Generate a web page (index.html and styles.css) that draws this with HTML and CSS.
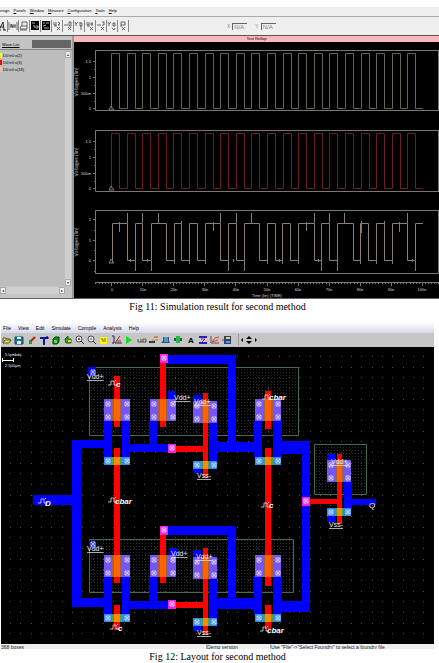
FILE: index.html
```html
<!DOCTYPE html>
<html lang="en">
<head>
<meta charset="utf-8">
<title>Simulation and layout figures</title>
<link rel="stylesheet" href="styles.css">
</head>
<body>
<figure class="figure">
  <div class="scope">
    <nav class="scope-menu">
      <button>esign</button><button><u>P</u>anels</button><button><u>W</u>indow</button><button><u>M</u>easure</button><button><u>C</u>onfiguration</button><button><u>T</u>ools</button><button><u>H</u>elp</button>
    </nav>
    <div class="scope-tools">
      <div class="scope-icons">
        <button aria-label="Font"><svg viewBox="0 0 10 12"><path d="M2 10L6 2l1 8M3 7h4M1 10h3M6 10h3" class="ik"/></svg></button>
        <button aria-label="Panel"><svg viewBox="0 0 10 12"><path d="M1 2v8M9 2v8M3 8V4l2 4V4M7 4v4M2 6h6" class="ig"/></svg></button>
        <button aria-label="Print"><svg viewBox="0 0 10 12"><path d="M3 6V2h5v4M2 6h6v3H1zM1 10h7" class="ig"/></svg></button>
        <button aria-label="Add panel"><svg viewBox="0 0 10 12"><path d="M1 1h8v9H1z"/><path d="M2 3h3M3 6h2v2M6 6h2v2H6" class="iw"/></svg></button>
        <button aria-label="Remove panel"><svg viewBox="0 0 10 12"><path d="M1 1h8v9H1z"/><path d="M2 3h2M5 3h3M2 6l3-1M3 8h5" class="iw"/></svg></button>
        <button aria-label="Zoom X"><svg viewBox="0 0 10 12"><path d="M2 2v3h2V2M6 2l2 1-2 2h2M2 6h3M5 7l3 3M8 7l-3 3" class="ig"/></svg></button>
        <button aria-label="Pan X"><svg viewBox="0 0 10 12"><path d="M1 5h4M6 2h2v4H6zM5 7l3 3M8 7l-3 3" class="ig"/></svg></button>
        <button aria-label="Zoom Y"><svg viewBox="0 0 10 12"><path d="M1 2l1 2 2-2M2 4v2M6 2v4h2V3H6M7 6v4" class="ig"/></svg></button>
        <button aria-label="Fit X"><svg viewBox="0 0 10 12"><path d="M2 2v3h2V2M7 2v4M5 4h3M2 6h3M5 7l3 3M8 7l-3 3" class="ig"/></svg></button>
        <button aria-label="Move X"><svg viewBox="0 0 10 12"><path d="M1 5h4M6 2h2v3H6M5 7l3 3M8 7l-3 3" class="ig"/></svg></button>
        <button aria-label="Fit Y"><svg viewBox="0 0 10 12"><path d="M1 2l1 2 2-2M2 4v2M6 3h2v3H6zM5 8l2 2 1-2" class="ig"/></svg></button>
        <button aria-label="Reset"><svg viewBox="0 0 10 12"><path d="M3 2h4v3H3zM3 5v2M4 7l3 3M7 7l-3 3" class="ig"/></svg></button>
      </div>
      <div class="coords">
        <label for="cx">X</label><input id="cx" value="N/A">
        <label for="cy">Y</label><input id="cy" value="N/A">
      </div>
    </div>
    <div class="scope-body">
      <aside class="waves">
        <div class="waves-head"><span>Wave List</span><i></i></div>
        <div class="waves-main">
          <ul>
            <li><b class="yellow"></b>D0:tr0:v(2)</li>
            <li><b class="red"></b>D0:tr0:v(3)</li>
            <li><b class="peach"></b>D0:tr0:v(18)</li>
          </ul>
          <div class="vbar"><button aria-label="Scroll up">▴</button><button aria-label="Scroll down">▾</button></div>
        </div>
        <div class="hbar"><button aria-label="Scroll left">◂</button><button aria-label="Scroll right">▸</button></div>
      </aside>
      <div class="plots">
        <div class="plots-title">Test Reflop</div>
        <svg viewBox="74 42 365 256" class="plots-area" id="plots">
          <g class="frame">
            <path d="M439 50.500H95.500V110.500H439M439 130.500H95.500V191.500H439M439 210.500H95.500V273.500H439M438.500 50v60M438.500 130v61M438.500 210v63M95 282.500H439"/>
            <path d="M93 61.500h3M93 77.500h3M93 93.500h3M93 108.500h3M93 141.500h3M93 157.500h3M93 173.500h3M93 188.500h3M93 219.500h3M93 240.500h3M93 260.500h3M94 69.500h2M94 85.500h2M94 101.500h2M94 149.500h2M94 165.500h2M94 181.500h2M94 230.500h2M94 250.500h2M94 271.500h2"/>
          </g>
          <path id="ticks" class="frame"/>
          <path id="wave1" class="w1"/>
          <path id="wave2" class="w2"/>
          <path id="wave3" class="w3"/>
          <path class="spikes" d="M127.500 213v10M142.500 213v10M158.500 213v10M220.500 213v10M236.500 213v10M251.500 213v10M314.500 213v10M329.500 213v10M344.500 213v10M407.500 213v10M119.500 222v10M181.500 221v11M213.500 222v9M306.500 222v9M361.500 221v12M384.500 221v11M399.500 222v10M135.500 261v10M151.500 261v10M228.500 261v10M244.500 261v10M321.500 261v10M337.500 261v10M415.500 261v10M174.500 258v6M189.500 258v6M205.500 258v6M267.500 252v12M282.500 258v6M298.500 258v6M360.500 258v6M376.500 258v6M392.500 256v8M130.500 259v3M147.500 259v3M233.500 259v3M279.500 259v3M318.500 259v3M412.500 259v3M109 263l2-4 3 4zM109 110l2-4 3 4zM109 190l2-4 3 4z"/>
          <g class="axis">
            <text x="91" y="63">1.5</text><text x="91" y="79">1</text><text x="91" y="95">500m</text><text x="91" y="110">0</text>
            <text x="91" y="143">1.5</text><text x="91" y="159">1</text><text x="91" y="175">500m</text><text x="91" y="190">0</text>
            <text x="91" y="221">2</text><text x="91" y="242">1</text><text x="91" y="262">0</text>
          </g>
          <g class="axis mid">
            <text x="112" y="291">0</text><text x="143" y="291">10n</text><text x="174" y="291">20n</text><text x="205" y="291">30n</text><text x="236" y="291">40n</text><text x="267" y="291">50n</text><text x="298" y="291">60n</text><text x="329" y="291">70n</text><text x="360" y="291">80n</text><text x="391" y="291">90n</text><text x="422" y="291">100n</text>
            <text x="267" y="297">Time (lin) (TIME)</text>
            <g class="side">
              <text transform="translate(78 82) rotate(-90)">Voltages (lin)</text>
              <text transform="translate(78 162) rotate(-90)">Voltages (lin)</text>
              <text transform="translate(78 242) rotate(-90)">Voltages (lin)</text>
            </g>
          </g>
        </svg>
      </div>
    </div>
  </div>
  <figcaption>Fig 11: Simulation result for second method</figcaption>
</figure>

<figure class="figure">
  <div class="editor">
    <nav class="editor-menu">
      <button>File</button><button>View</button><button>Edit</button><button>Simulate</button><button>Compile</button><button>Analysis</button><button>Help</button>
    </nav>
    <div class="editor-tools">
      <div class="group">
        <button aria-label="Open"><svg viewBox="0 0 12 12"><path d="M2 9V4h3l1 1h3v1" fill="#fd6" stroke="#553"/><path d="M2 9l2-3h6L8 9z" fill="#ee5" stroke="#553"/></svg></button>
        <button aria-label="Save"><svg viewBox="0 0 12 12"><path d="M2 3h8v7H2z" fill="#167a8c" stroke="#245"/><path d="M4 3h4v2H4zM4 7h4v3H4z" fill="#dee"/></svg></button>
      </div>
      <div class="group">
        <button aria-label="Draw"><svg viewBox="0 0 12 12"><path d="M3 6h3v4H3z" fill="#1a3"/><path d="M5 7l4-4" stroke="#b21" stroke-width="2"/></svg></button>
        <button aria-label="Cut"><svg viewBox="0 0 12 12"><path d="M2 3h8v2H7v6H5V5H2z" fill="#11b"/><path d="M8 3h2v2" stroke="#000" fill="none"/></svg></button>
        <button aria-label="Copy"><svg viewBox="0 0 12 12"><path d="M3 5l2-2h4v5L7 10H3z" fill="#182" stroke="#041"/><path d="M4 6h3v3H4z" fill="#6d4"/></svg></button>
        <button aria-label="Move"><svg viewBox="0 0 12 12"><path d="M3 5l3-3v3h3v4H4z" fill="#2a2" stroke="#251"/><path d="M6 6h3v2H6z" fill="#dd3"/></svg></button>
        <button aria-label="Zoom in"><svg viewBox="0 0 12 12"><circle cx="5" cy="5" r="3" fill="#eef" stroke="#444"/><path d="M7 7l3 3M4 5h2M5 4v2" stroke="#333"/></svg></button>
        <button aria-label="Zoom out"><svg viewBox="0 0 12 12"><circle cx="5" cy="5" r="3" fill="#eef" stroke="#444"/><path d="M7 7l3 3M4 5h2" stroke="#333"/></svg></button>
        <button aria-label="View all"><svg viewBox="0 0 12 12"><path d="M2 3h7v7H2z" fill="#fe2"/><path d="M3 5h2v3M7 4v4" stroke="#773" fill="none"/></svg></button>
      </div>
      <div class="group">
        <button aria-label="Rules"><svg viewBox="0 0 12 12"><path d="M1 2h2v7h-2M4 9h7" stroke="#226" fill="none"/><path d="M4 9l5-7M6 7h4" stroke="#c22"/></svg></button>
        <button aria-label="Run"><svg viewBox="0 0 12 12"><path d="M3 2l6 4-6 4z" fill="#1d2"/></svg></button>
      </div>
      <div class="group">
        <button aria-label="Measure"><svg viewBox="0 0 12 12"><path d="M2 5v3h3V5M7 8V5h3v3M5 8h5" stroke="#555" fill="none"/></svg></button>
        <button aria-label="Section"><svg viewBox="0 0 12 12"><path d="M1 7h6v2H1z" fill="#237"/><path d="M4 5h6v2H4z" fill="#da2"/><path d="M6 3h4" stroke="#a43"/></svg></button>
        <button aria-label="3D"><svg viewBox="0 0 12 12"><path d="M3 3h6v4l1 2H1l2-2z" fill="#258"/><path d="M5 3v5M7 3v5" stroke="#9cf"/></svg></button>
        <button aria-label="Component"><svg viewBox="0 0 12 12"><path d="M2 4h8v3H2z" fill="#254"/><path d="M4 2h4v7H4z" fill="#2b4"/></svg></button>
      </div>
      <div class="group">
        <button aria-label="Text"><svg viewBox="0 0 12 12"><text x="3" y="9" class="tool-text">A</text></svg></button>
        <button aria-label="Connect"><svg viewBox="0 0 12 12"><path d="M2 3h8M2 9h8" stroke="#22c" stroke-width="2"/><path d="M4 5h4L5 8" stroke="#c24" fill="none"/></svg></button>
        <button aria-label="Chart"><svg viewBox="0 0 12 12"><path d="M2 2v7h8" stroke="#844" fill="none"/><path d="M3 8l3-4 4-1M3 8l6-2" stroke="#c44" fill="none"/></svg></button>
        <button aria-label="Palette"><svg viewBox="0 0 12 12"><path d="M3 2h7v8H3z" fill="#247"/><path d="M5 3h4v2H5z" fill="#fc4"/><path d="M5 7h4v2H5z" fill="#4ad"/><path d="M1 6h3" stroke="#c22"/></svg></button>
      </div>
      <div class="group arrows">
        <button aria-label="Pan"><svg viewBox="0 0 20 12"><path d="M4 4v4L2 6zM10 2l3 3H7zM10 10l3-3H7zM16 4v4l2-2z"/></svg></button>
      </div>
    </div>
    <svg class="canvas" viewBox="1 347 433 297">
      <defs>
        <pattern id="grid" x="10" y="356" width="31" height="32" patternUnits="userSpaceOnUse"><path d="M0 0h1v1H0zM10 0h1v1h-1zM21 0h1v1h-1zM0 11h1v1H0zM10 11h1v1h-1zM21 11h1v1h-1zM0 21h1v1H0zM10 21h1v1h-1zM21 21h1v1h-1z" fill="#4c4c4c"/></pattern>
        <pattern id="well" x="90" y="368" width="3" height="3" patternUnits="userSpaceOnUse"><path d="M1 1h1v1H1z" fill="#25302a"/></pattern>
        <g id="via"><path d="M-2 -2h4v4h-4zM-2 -2l4 4M2 -2l-4 4" fill="none" stroke="#dcdcff" stroke-width=".8"/></g>
        <g id="pulse"><path d="M0 5h3V1h3v4h3" fill="none" stroke="#e8e8e8" stroke-width=".8"/><path d="M7 0h1v1H7z" fill="#fff"/></g>
        <g id="pmos">
          <path d="M0 0h26v22H0z" fill="#7654f5"/><path d="M8 0h10v22H8z" fill="#a86038"/><path d="M10 0h6v22h-6z" fill="#ff6200"/>
          <use href="#via" x="4" y="5"/><use href="#via" x="23" y="5"/><use href="#via" x="4" y="18"/><use href="#via" x="23" y="18"/>
        </g>
        <g id="nmos">
          <path d="M0 0h26v8H0z" fill="#2a8fe8"/><path d="M8 0h10v8H8z" fill="#5c9a50"/><path d="M10 0h6v8h-6z" fill="#f09000"/>
          <use href="#via" x="4" y="4"/><use href="#via" x="23" y="4"/>
        </g>
        <g id="pmos-s">
          <path d="M0 0h24v22H0z" fill="#7654f5"/><path d="M8 0h8v22H8z" fill="#a86038"/><path d="M10 0h5v22h-5z" fill="#ff6200"/>
          <use href="#via" x="4" y="5"/><use href="#via" x="21" y="5"/><use href="#via" x="4" y="18"/><use href="#via" x="21" y="18"/>
        </g>
        <g id="nmos-s">
          <path d="M0 0h24v8H0z" fill="#2a8fe8"/><path d="M8 0h8v8H8z" fill="#5c9a50"/><path d="M10 0h5v8h-5z" fill="#f09000"/>
          <use href="#via" x="4" y="4"/><use href="#via" x="21" y="4"/>
        </g>
        <g id="contact"><path d="M0 0h8v9H0z" fill="#f425dc"/><use href="#via" x="4" y="4"/></g>
      </defs>
      <path d="M1 347h433v297H1z"/>
      <path d="M1 347h433v297H1z" fill="url(#grid)"/>
      <g class="wells">
        <path d="M89.500 367.500h209v68h-209zM314.500 444.500h52v50h-52zM89.500 539.500h204v53h-204z"/>
      </g>
      <g class="metal">
        <path d="M72 440h40v8H81v150h31v9H72V505H33v-10h39z"/>
        <path d="M104 421h8v36h-8zM122 421h8v23h38v8h-38v5h-8zM149 421h8v24h-8zM168 391h8v30h-8z"/>
        <path d="M168 355h68v87h18v-21h8v36h-8v-5h-37v9h-8v-39h8v20h11V364h-60zM193 395h8v8h-8zM193 468h8v5h-8z"/>
        <path d="M273 421h9v20h28v171h-28v2h-9v-37h9v24h20V454h-20v4h-9z"/>
        <path d="M104 576h8v38h-8zM122 576h8v25h19v-25h8v25h11v8h-38v5h-8zM169 548h8v8h-8z"/>
        <path d="M168 526h68v72h18v-22h8v38h-8v-5h-37v10h-8v-41h8v20h11V535h-60zM193 550h8v8h-8zM193 626h8v5h-8z"/>
        <path d="M327 454h8v8h-8zM344 481h8v18h24v6h-24v4h-8zM327 515h8v7h-8zM88 367h8v9h-8zM89 541h7v7h-7z"/>
      </g>
      <g class="poly">
        <path d="M114 376h6v51h-6zM114 448h6v135h-6zM114 605h6v25h-6zM160 363h6v64h-6zM160 535h6v48h-6zM203 393h5v85h-5zM175 446h29v6h-29zM265 391h6v38h-6zM265 448h6v138h-6zM265 605h6v24h-6zM203 548h5v87h-5zM176 602h28v6h-28zM337 454h5v70h-5zM309 499h29v5h-29z"/>
      </g>
      <use href="#pmos" x="104" y="399"/><use href="#pmos" x="150" y="399"/><use href="#pmos" x="255" y="399"/>
      <use href="#pmos" x="104" y="555"/><use href="#pmos" x="150" y="555"/><use href="#pmos" x="255" y="555"/>
      <use href="#nmos" x="104" y="457"/><use href="#nmos" x="255" y="457"/><use href="#nmos" x="104" y="614"/><use href="#nmos" x="255" y="614"/>
      <use href="#pmos-s" x="193" y="401"/><use href="#pmos-s" x="193" y="557"/><use href="#pmos-s" x="327" y="460"/>
      <use href="#nmos-s" x="193" y="461"/><use href="#nmos-s" x="193" y="618"/><use href="#nmos-s" x="327" y="508"/>
      <use href="#contact" x="160" y="354"/><use href="#contact" x="160" y="526"/><use href="#contact" x="168" y="444"/><use href="#contact" x="168" y="600"/><use href="#contact" x="302" y="497"/>
      <use href="#via" x="93" y="372"/><use href="#via" x="93" y="544"/>
      <g class="rail">
        <text x="87" y="379">Vdd+</text><text x="174" y="400">Vdd+</text><text x="194" y="404">Vdd+</text><text x="331" y="464">Vdd+</text>
        <text x="87" y="551">Vdd+</text><text x="171" y="556">Vdd+</text><text x="196" y="559">Vdd+</text>
        <text x="197" y="478">Vss-</text><text x="197" y="635">Vss-</text><text x="329" y="527">Vss-</text>
      </g>
      <text x="369" y="508" class="port">Q</text>
      <g class="signal">
        <use href="#pulse" x="108" y="380"/><text x="116" y="387">c</text>
        <use href="#pulse" x="262" y="394"/><text x="269" y="400">cbar</text>
        <use href="#pulse" x="38" y="498"/><text x="45" y="506">D</text>
        <use href="#pulse" x="108" y="497"/><text x="115" y="504">cbar</text>
        <use href="#pulse" x="261" y="502"/><text x="269" y="508">c</text>
        <use href="#pulse" x="110" y="624"/><text x="118" y="631">c</text>
        <use href="#pulse" x="260" y="626"/><text x="267" y="633">cbar</text>
      </g>
      <g class="scale"><text x="5" y="356">5 lambda</text><text x="5" y="367">2.500µm</text><path d="M2.500 358v4M13.500 358v4M2 360.500h12" stroke="#fff" stroke-width="1"/></g>
    </svg>
    <div class="status"><span>368 boxes</span><span>Demo version</span><span>Use "File"-&gt;"Select Foundry" to select a foundry file</span></div>
  </div>
  <figcaption>Fig 12: Layout for second method</figcaption>
</figure>
<script src="waves.js"></script>
</body>
</html>
```
FILE: styles.css
```css
* { box-sizing: border-box; }
body { margin: 0; background: #fff; font-family: "Liberation Sans", Arial, sans-serif; overflow-x: hidden; }
button { border: 0; padding: 0; margin: 0; background: none; font: inherit; color: inherit; }
svg { display: block; }
.figure { margin: 0; padding-top: 7px; }
.figure + .figure { padding-top: 10px; }
figcaption { padding: 2px 4px 0 0; font: 10px/12px "Liberation Serif", "Times New Roman", serif; color: #000; text-align: center; }

.scope { background: #efefef; border-bottom: 1px solid #6b5a60; }
.scope-menu { display: flex; gap: 4px; height: 10px; padding-top: 1px; border-bottom: 1px solid #aaa; font-size: 4px; color: #000; }
.scope-menu button { line-height: 6px; height: 6px; }
.scope-tools { display: flex; align-items: center; height: 19px; border-bottom: 1px solid #555; }
.scope-icons { display: flex; margin-left: -3px; }
.scope-icons button { width: 11px; height: 12px; border-right: 1px solid #888; }
.scope-icons svg { width: 10px; height: 12px; }
.ik, .ig, .iw { fill: none; stroke: #222; }
.ig { stroke: #444; stroke-width: .8; }
.iw { stroke: #ddd; stroke-width: .8; }
.coords { display: flex; align-items: center; gap: 2px; margin-left: 98px; font-size: 5px; color: #888; }
.coords input { width: 15px; height: 7px; margin-right: 6px; padding: 0 1px; border: 0; border-top: 1px solid #666; border-left: 1px solid #666; background: #efefef; color: #888; font: 6px/6px "Liberation Sans", sans-serif; }

.scope-body { display: grid; grid-template-columns: 74px 1fr; }
.waves { display: flex; flex-direction: column; background: #c4c4c4; border-right: 2px solid #999; font-size: 4px; color: #000; }
.waves-head { display: flex; align-items: center; height: 14px; border-bottom: 1px solid #888; padding-top: 3px; }
.waves-head span { width: 32px; padding-left: 2px; text-decoration: underline; }
.waves-head i { flex: 1; height: 8px; margin-right: 1px; background: #666; }
.waves-main { flex: 1; display: flex; justify-content: space-between; background: #bdbdbd; }
.waves ul { list-style: none; margin: 0; padding: 2px 0 0; }
.waves li { display: flex; align-items: center; gap: 1px; height: 7px; line-height: 7px; }
.waves b { width: 2px; height: 5px; }
.yellow { background: #ff0; }
.red { background: #f00; }
.peach { background: #fb9; }
.vbar { display: flex; flex-direction: column; justify-content: space-between; width: 6px; margin: 1px 1px 0 0; background: #cecece; }
.hbar { display: flex; justify-content: space-between; height: 7px; margin: 1px 7px 4px 0; background: #d0d0d0; }
.waves button { width: 6px; height: 7px; background: #f2f2f2; border: 1px solid #aaa; font-size: 4px; line-height: 4px; color: #222; }
.plots { background: #000; }
.plots-title { height: 6px; background: #ffb6c1; color: #200; text-align: center; font: 4px/6px "Liberation Sans", sans-serif; }
.plots-area { width: 100%; }
.frame { fill: none; stroke: #777; }
.w1, .w2, .w3, .spikes { fill: none; stroke-width: 1; }
.w1 { stroke: #66664f; }
.w2 { stroke: #6b1f24; }
.w3 { stroke: #8a7e76; }
.spikes { stroke: #857b74; }
.axis { fill: #ddd; font-size: 4px; text-anchor: end; }
.mid { text-anchor: middle; }
.side { font-size: 5px; fill: #bbb; }

.editor { margin: 0 5px 0 1px; }
.editor-menu { display: flex; gap: 7px; height: 10px; padding: 1px 2px; background: linear-gradient(#fdfdff, #d5d9ec); font-size: 5px; line-height: 8px; color: #000; }
.editor-menu button { line-height: 8px; height: 8px; }
.editor-tools { display: flex; align-items: center; gap: 1px; height: 14px; background: #c6c6c4; }
.group { display: flex; }
.group button { width: 12px; height: 12px; }
.group svg { width: 12px; height: 12px; }
.arrows { margin-left: 4px; border-left: 1px solid #999; }
.arrows button, .arrows svg { width: 20px; }
.tool-text { font-size: 8px; font-weight: bold; }
.canvas { width: 100%; }
.wells path { fill: url(#well); stroke: #4a6a50; }
.metal { fill: #00f; }
.poly { fill: #f00; }
.rail { fill: #f0f0ff; font-size: 7px; text-decoration: underline; }
.port { fill: #f0f0ff; font-size: 8px; }
.signal { fill: #fff; font-size: 8px; font-weight: bold; font-style: italic; }
.scale { fill: #eee; font-size: 4px; }
.status { display: grid; grid-template-columns: 205fr 64fr 164fr; height: 5px; overflow: hidden; background: #ededed; font-size: 5px; line-height: 7px; color: #222; white-space: nowrap; }
.status span + span { border-left: 1px solid #aaa; }
```
FILE: waves.js
```js
const el = id => document.getElementById(id);

function clock(high, low) {
  let d = `M111.500 ${low}`;
  for (let k = 0; k < 20; k++) {
    const x = Math.round(111 + 15.600 * k) + 0.5;
    d += `V${high}H${x + 8}V${low}`;
    d += k < 19 ? `H${Math.round(111 + 15.600 * (k + 1)) + 0.5}` : "H423";
  }
  return d;
}

const edges = [112, 127, 135, 142, 151, 166, 174, 181, 189, 197, 205, 220, 228, 236, 244, 259, 267, 275, 282, 290, 298, 314, 321, 329, 337, 353, 360, 368, 376, 384, 392, 407, 415];
let output = "M112.500 262.500";
edges.forEach((x, i) => {
  output += `H${x + 0.5}V${i % 2 ? 260.5 : 223.5}`;
});
output += "H423";

let ticks = "";
for (let i = -5; i <= 105; i++) {
  const x = Math.round(111 + 3.110 * i) + 0.5;
  ticks += `M${x} 282v${i % 10 ? 2 : 4}`;
}

el("wave1").setAttribute("d", clock(53.5, 108.5));
el("wave2").setAttribute("d", clock(133.5, 188.5));
el("wave3").setAttribute("d", output);
el("ticks").setAttribute("d", ticks);
```
